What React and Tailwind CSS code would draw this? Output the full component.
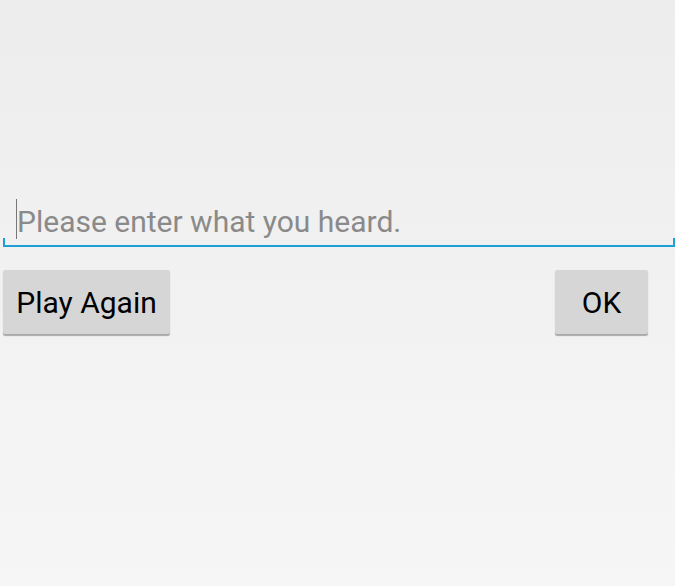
export default function App() {
  return (
    <div
      className="w-[675px] h-[586px] overflow-hidden bg-gradient-to-b from-[#ededed] to-[#f6f6f6] flex flex-col"
      style={{ fontFamily: "Roboto, sans-serif" }}
    >
      <div className="h-[199px] shrink-0" />
      <div className="relative ml-[3px] h-[48px] shrink-0">
        <div className="absolute left-[13px] top-0 w-[1px] h-[40px] bg-[#777]" />
        <div className="pl-[14px] pt-[3px] text-[30px] leading-[40px] text-[#8a8a8a] whitespace-nowrap">
          Please enter what you heard.
        </div>
        <div className="absolute left-0 right-0 bottom-0 h-[2px] bg-[#1ea0d6]" />
        <div className="absolute left-0 bottom-0 w-[2px] h-[9px] bg-[#1ea0d6]" />
        <div className="absolute right-0 bottom-0 w-[2px] h-[9px] bg-[#1ea0d6]" />
      </div>
      <div className="flex justify-between pl-[3px] pr-[27px] mt-[23px]">
        <div className="w-[167px] h-[64px] bg-[#d6d6d6] rounded-[2px] shadow-[0_2px_1px_rgba(0,0,0,0.3)] flex items-center justify-center text-[30px] text-black">
          Play Again
        </div>
        <div className="w-[93px] h-[64px] bg-[#d6d6d6] rounded-[2px] shadow-[0_2px_1px_rgba(0,0,0,0.3)] flex items-center justify-center text-[30px] text-black">
          OK
        </div>
      </div>
    </div>
  );
}
